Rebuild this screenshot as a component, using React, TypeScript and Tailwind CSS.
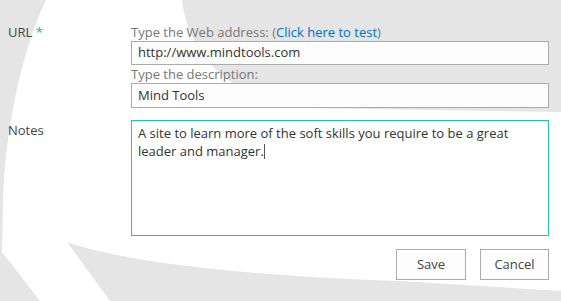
import React from 'react';

function Backdrop() {
  return (
    <svg className="absolute inset-0" width="561" height="301" viewBox="0 0 561 301">
      <path d="M0,0 L46,0 C22,50 5,130 3,200 L2,252 L40,301 L0,301 Z" fill="#e5e5e5" />
      <path d="M182,0 C186,40 215,95 300,108 L561,112 L561,0 Z" fill="#e5e5e5" />
      <path d="M67,242 C110,258 220,275 400,281 L561,291 L561,301 L110,301 Z" fill="#e5e5e5" />
    </svg>
  );
}

export default function App() {
  return (
    <div className="relative w-[561px] h-[301px] overflow-hidden bg-white text-[13px] text-[#444] font-['Open_Sans',sans-serif]">
      <Backdrop />

      <div className="relative pt-[24px] pl-[8px] pr-[12px]">
        {/* URL */}
        <div className="flex">
          <div className="w-[123px] leading-[17px]">
            URL <span className="text-[#2aa9b0]">*</span>
          </div>
          <div className="w-[418px]">
            <div className="leading-[17px] text-[#777]">
              Type the Web address: (<span className="text-[#0072c6]">Click here to test</span>)
            </div>
            <div className="h-[24px] flex items-center px-[6px] border border-[#ababab] bg-[#fdfdfd] text-[#333]">
              http://www.mindtools.com
            </div>
            <div className="leading-[18px] text-[#777]">Type the description:</div>
            <div className="h-[25px] flex items-center px-[6px] border border-[#ababab] bg-[#fdfdfd] text-[#333]">
              Mind Tools
            </div>
          </div>
        </div>

        {/* Notes */}
        <div className="flex mt-[12px]">
          <div className="w-[123px] pt-[2px] leading-[17px]">Notes</div>
          <div className="w-[418px] h-[116px] border border-[#1fc1c1] bg-white pl-[6px] pr-[8px] pt-[3px] leading-[18px] text-[#333]">
            A site to learn more of the soft skills you require to be a great leader and manager.
            <span className="inline-block w-px h-[15px] bg-[#555] align-[-3px]" />
          </div>
        </div>

        {/* Buttons */}
        <div className="flex justify-end gap-[14px] mt-[13px]">
          <button className="w-[70px] h-[31px] border border-[#ababab] bg-[#fdfdfd] text-[#444]">Save</button>
          <button className="w-[69px] h-[31px] border border-[#ababab] bg-[#fdfdfd] text-[#444]">Cancel</button>
        </div>
      </div>
    </div>
  );
}
